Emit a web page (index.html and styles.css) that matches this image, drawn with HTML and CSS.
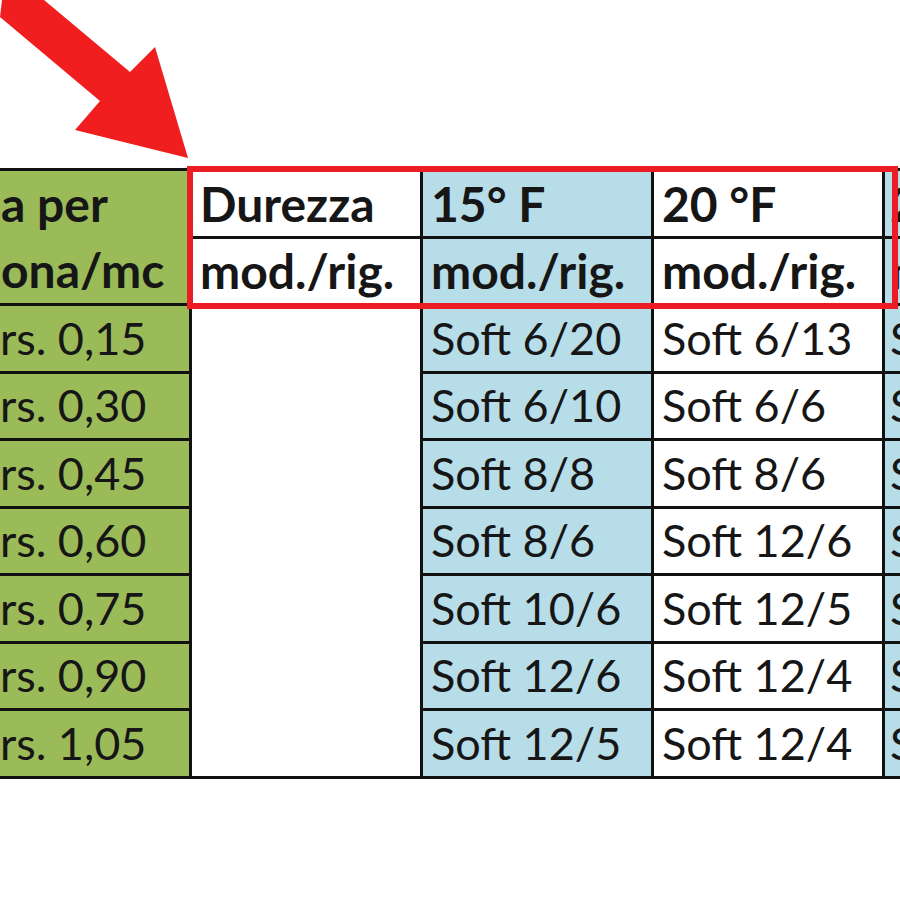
FILE: index.html
```html
<!DOCTYPE html>
<html lang="it">
<head>
<meta charset="utf-8">
<title>Durezza</title>
<link rel="stylesheet" href="styles.css">
</head>
<body>
<div class="canvas">
  <svg class="arrow" width="200" height="170" viewBox="0 0 200 170" aria-hidden="true">
    <polygon points="2,0 44,0 130,72 155,47 188,158 75,130 100,101 0,17" fill="#f01e1e"/>
  </svg>

  <div class="sheet">
    <div class="c green head2"><span>a per</span><span>ona/mc</span></div>
    <div class="c white bold">Durezza</div>
    <div class="c blue bold">15° F</div>
    <div class="c white bold">20 °F</div>
    <div class="c blue bold last">25 °F</div>

    <div class="c white bold">mod./rig.</div>
    <div class="c blue bold">mod./rig.</div>
    <div class="c white bold">mod./rig.</div>
    <div class="c blue bold last">mod./rig.</div>

    <div class="c green first">rs. 0,15</div>
    <div class="c white merged"></div>
    <div class="c blue">Soft 6/20</div>
    <div class="c white">Soft 6/13</div>
    <div class="c blue last">Soft 6/6</div>

    <div class="c green first">rs. 0,30</div>
    <div class="c blue">Soft 6/10</div>
    <div class="c white">Soft 6/6</div>
    <div class="c blue last">Soft 6/6</div>

    <div class="c green first">rs. 0,45</div>
    <div class="c blue">Soft 8/8</div>
    <div class="c white">Soft 8/6</div>
    <div class="c blue last">Soft 8/6</div>

    <div class="c green first">rs. 0,60</div>
    <div class="c blue">Soft 8/6</div>
    <div class="c white">Soft 12/6</div>
    <div class="c blue last">Soft 12/6</div>

    <div class="c green first">rs. 0,75</div>
    <div class="c blue">Soft 10/6</div>
    <div class="c white">Soft 12/5</div>
    <div class="c blue last">Soft 12/5</div>

    <div class="c green first">rs. 0,90</div>
    <div class="c blue">Soft 12/6</div>
    <div class="c white">Soft 12/4</div>
    <div class="c blue last">Soft 12/4</div>

    <div class="c green first">rs. 1,05</div>
    <div class="c blue">Soft 12/5</div>
    <div class="c white">Soft 12/4</div>
    <div class="c blue last">Soft 12/4</div>
  </div>

  <div class="highlight"></div>
</div>
</body>
</html>
```

FILE: styles.css
```css
html, body {
  margin: 0;
  padding: 0;
  background: #ffffff;
}

.canvas {
  position: relative;
  width: 900px;
  height: 900px;
  overflow: hidden;
  padding-top: 168px;
  box-sizing: border-box;
  font-family: Lato, "Liberation Sans", sans-serif;
  color: #161616;
}

.arrow {
  position: absolute;
  left: 0;
  top: 0;
}

.sheet {
  display: grid;
  grid-template-columns: 189px 228px 228px 228px 1fr;
  grid-template-rows: repeat(9, 64.5px);
  gap: 3px;
  padding: 3px 0;
  background: #111111;
  width: 920px;
}

.c {
  display: flex;
  align-items: flex-end;
  padding: 0 0 10px 8px;
  font-size: 45px;
  line-height: 1;
  white-space: nowrap;
  overflow: hidden;
}

.bold {
  font-weight: 700;
  font-size: 48px;
  padding-bottom: 8px;
}

.green {
  background: #9bbb59;
}

.blue {
  background: #b7dde8;
}

.white {
  background: #ffffff;
}

.first {
  padding-left: 0;
}

.last {
  padding-left: 5px;
}

.head2 {
  grid-row: span 2;
  flex-direction: column;
  align-items: flex-start;
  justify-content: flex-start;
  padding: 0 0 0 1px;
  font-weight: 700;
  font-size: 48px;
  line-height: 66px;
}

.merged {
  grid-column: 2;
  grid-row: 3 / span 7;
}

.highlight {
  position: absolute;
  left: 187px;
  top: 166px;
  width: 711px;
  height: 143px;
  box-sizing: border-box;
  border: 6px solid #ec1c24;
}
```
